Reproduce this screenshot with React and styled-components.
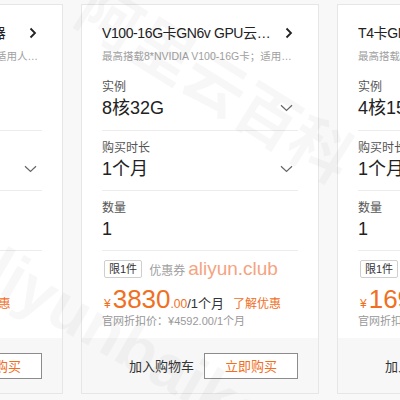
import React from 'react';
import styled, { createGlobalStyle } from 'styled-components';

const GlobalStyle = createGlobalStyle`
  html, body {
    margin: 0;
    padding: 0;
    background: #f8f8f8;
  }
  body {
    font-family: "Liberation Sans", "Noto Sans CJK SC", sans-serif;
    color: #333;
  }
`;

const Stage = styled.div`
  position: relative;
  width: 400px;
  height: 400px;
  overflow: hidden;
`;

const CardRow = styled.div`
  display: flex;
  gap: 18px;
  margin-left: -175px;
  padding-top: 4px;
`;

const Card = styled.div`
  flex: none;
  width: 238px;
  min-width: 0;
  height: 390px;
  box-sizing: border-box;
  background: #fff;
  border: 1px solid #e6e6e6;
  display: flex;
  flex-direction: column;
`;

const CardBody = styled.div`
  flex: 1;
  padding: 17px 20px 0;
  min-width: 0;
`;

const TitleRow = styled.div`
  display: flex;
  align-items: center;
  height: 22px;
`;

const Title = styled.div`
  flex: 1;
  min-width: 0;
  font-size: 14px;
  line-height: 22px;
  letter-spacing: -0.4px;
  color: #222;
  white-space: nowrap;
  overflow: hidden;
  text-overflow: ellipsis;
  padding-right: 13px;
`;

const Arrow = styled.svg`
  flex: none;
  width: 8px;
  height: 12px;
  margin-right: 5px;
`;

const Subtitle = styled.div`
  margin-top: 4px;
  font-size: 10.5px;
  line-height: 16px;
  color: #a0a0a0;
  white-space: nowrap;
  overflow: hidden;
  text-overflow: ellipsis;
`;

const Field = styled.div`
  padding: ${(p) => (p.first ? '15px 0 9px' : '9px 0 8px')};
  border-bottom: 1px solid #ececec;
`;

const Label = styled.div`
  font-size: 12px;
  line-height: 16px;
  color: #555;
`;

const ValueRow = styled.div`
  display: flex;
  align-items: center;
  justify-content: space-between;
  height: 26px;
`;

const Value = styled.span`
  font-size: 18px;
  line-height: 26px;
  color: #222;
`;

const Chevron = styled.svg`
  width: 13px;
  height: 8px;
  margin-right: 5px;
`;

const PromoRow = styled.div`
  display: flex;
  align-items: center;
  margin-top: 9px;
  height: 18px;
  white-space: nowrap;
`;

const Tag = styled.span`
  box-sizing: border-box;
  height: 18px;
  margin-left: 2px;
  padding: 0 4px;
  border: 1px solid #cfcfcf;
  border-radius: 2px;
  font-size: 11px;
  line-height: 16px;
  color: #333;
`;

const CouponLabel = styled.span`
  margin-left: 7px;
  font-size: 12px;
  color: #a0a0a0;
`;

const CouponCode = styled.span`
  margin-left: 3px;
  font-size: 19px;
  color: #f5a47f;
`;

const PriceRow = styled.div`
  display: flex;
  align-items: baseline;
  margin-top: 6px;
  height: 30px;
  white-space: nowrap;
  color: #f0701f;
`;

const Yen = styled.span`
  font-size: 12px;
  margin: 0 2px;
`;

const Amount = styled.span`
  font-size: 26px;
  line-height: 30px;
`;

const Cents = styled.span`
  font-size: 12px;
`;

const Period = styled.span`
  font-size: 13px;
  color: #333;
`;

const MoreLink = styled.span`
  margin-left: 9px;
  font-size: 12px;
  color: #f0701f;
`;

const ListPrice = styled.div`
  font-size: 11px;
  line-height: 14px;
  color: #999;
  white-space: nowrap;
`;

const Footer = styled.div`
  flex: none;
  height: 55px;
  background: #f7f7f7;
  display: flex;
  align-items: center;
  justify-content: flex-end;
  gap: 10px;
  padding-right: 20px;
`;

const CartButton = styled.span`
  font-size: 13px;
  color: #333;
`;

const BuyButton = styled.span`
  box-sizing: border-box;
  width: 94px;
  height: 26px;
  border: 1px solid #8c8c8c;
  background: #fff;
  display: flex;
  align-items: center;
  justify-content: center;
  font-size: 13px;
  color: #f0701f;
`;

const Watermark = styled.div`
  position: absolute;
  left: ${(p) => p.x}px;
  top: ${(p) => p.y}px;
  transform: rotate(${(p) => p.angle}deg);
  transform-origin: left top;
  font-size: ${(p) => p.size}px;
  font-weight: bold;
  white-space: nowrap;
  color: rgba(0, 0, 0, 0.03);
  pointer-events: none;
`;

const ArrowIcon = () => (
  <Arrow viewBox="0 0 8 12">
    <path d="M1.5 1.5 6 6l-4.5 4.5" fill="none" stroke="#222" strokeWidth="1.8" />
  </Arrow>
);

const ChevronIcon = () => (
  <Chevron viewBox="0 0 13 8">
    <path d="M1 1.2 6.5 6.5 12 1.2" fill="none" stroke="#666" strokeWidth="1.2" />
  </Chevron>
);

const products = [
  {
    title: 'P100卡GN5 GPU云服务器',
    desc: '最高搭载2*NVIDIA P100-16卡；适用人工智能推理场景',
    spec: '4核30G',
    specSelect: false,
    coupon: false,
    amount: '688',
    list: '826.00',
  },
  {
    title: 'V100-16G卡GN6v GPU云服务器',
    desc: '最高搭载8*NVIDIA V100-16G卡；适用于深度学习训练',
    spec: '8核32G',
    specSelect: true,
    coupon: true,
    amount: '3830',
    list: '4592.00',
  },
  {
    title: 'T4卡GN6i GPU云服务器',
    desc: '最高搭载4*NVIDIA T4卡；适用于AI推理',
    spec: '4核15G',
    specSelect: true,
    coupon: true,
    amount: '1694',
    list: '2030.00',
  },
];

function ProductCard({ item }) {
  return (
    <Card>
      <CardBody>
        <TitleRow>
          <Title>{item.title}</Title>
          <ArrowIcon />
        </TitleRow>
        <Subtitle>{item.desc}</Subtitle>
        <Field first>
          <Label>实例</Label>
          <ValueRow>
            <Value>{item.spec}</Value>
            {item.specSelect && <ChevronIcon />}
          </ValueRow>
        </Field>
        <Field>
          <Label>购买时长</Label>
          <ValueRow>
            <Value>1个月</Value>
            <ChevronIcon />
          </ValueRow>
        </Field>
        <Field>
          <Label>数量</Label>
          <ValueRow>
            <Value>1</Value>
          </ValueRow>
        </Field>
        <PromoRow>
          <Tag>限1件</Tag>
          {item.coupon && (
            <>
              <CouponLabel>优惠券</CouponLabel>
              <CouponCode>aliyun.club</CouponCode>
            </>
          )}
        </PromoRow>
        <PriceRow>
          <Yen>¥</Yen>
          <Amount>{item.amount}</Amount>
          <Cents>.00</Cents>
          <Period>/1个月</Period>
          <MoreLink>了解优惠</MoreLink>
        </PriceRow>
        <ListPrice>官网折扣价：¥{item.list}/1个月</ListPrice>
      </CardBody>
      <Footer>
        <CartButton>加入购物车</CartButton>
        <BuyButton>立即购买</BuyButton>
      </Footer>
    </Card>
  );
}

export default function App() {
  return (
    <Stage>
      <GlobalStyle />
      <CardRow>
        {products.map((item) => (
          <ProductCard key={item.title} item={item} />
        ))}
      </CardRow>
      <Watermark x={110} y={-40} angle={32} size={62}>
        阿里云百科
      </Watermark>
      <Watermark x={-20} y={215} angle={30} size={64}>
        aliyunbaike.com
      </Watermark>
    </Stage>
  );
}
